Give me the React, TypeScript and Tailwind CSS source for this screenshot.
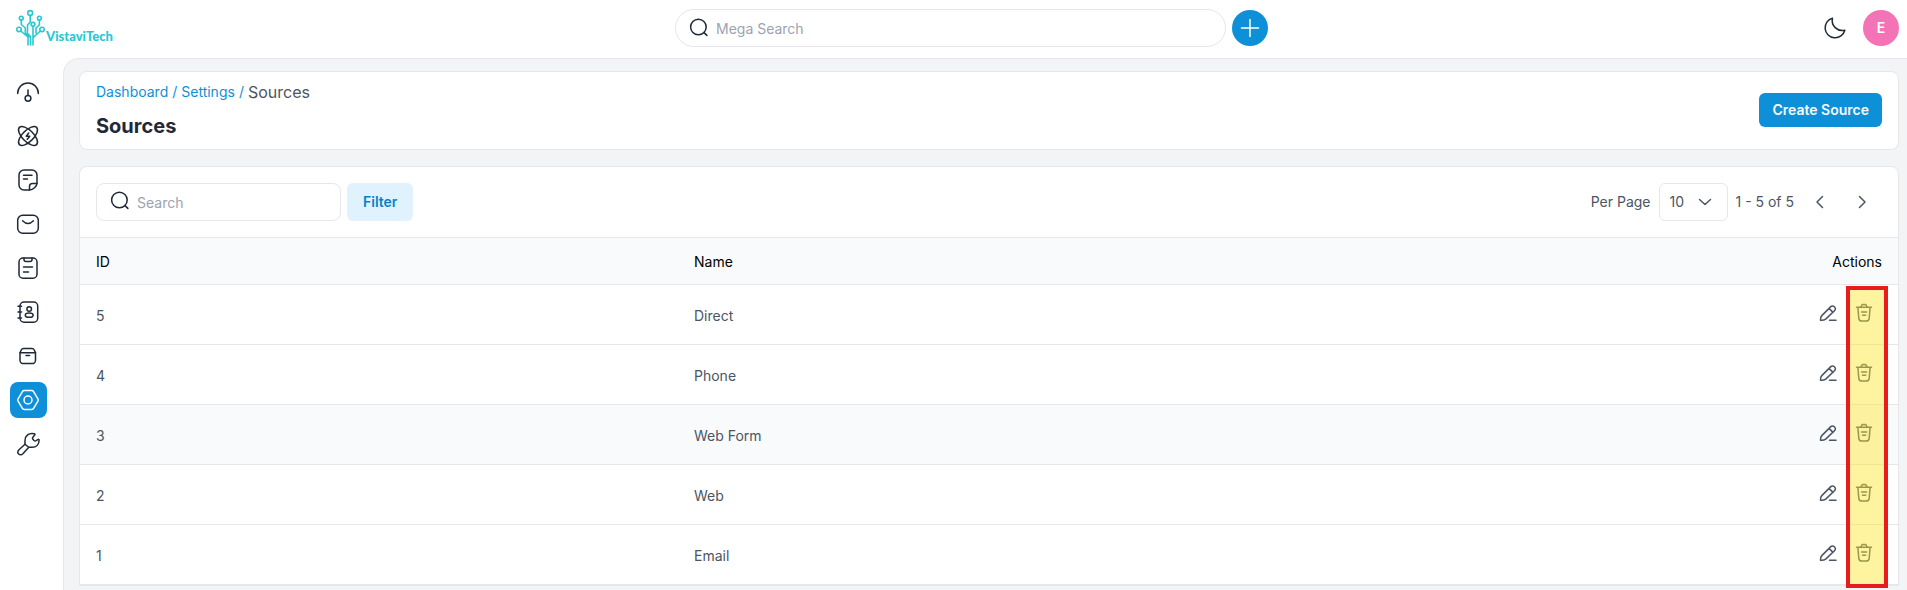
import React from "react";

type IconProps = { children: React.ReactNode; className?: string; stroke?: number };

function Icon({ children, className = "size-6", stroke = 1.5 }: IconProps) {
  return (
    <svg
      viewBox="0 0 24 24"
      className={className}
      fill="none"
      stroke="currentColor"
      strokeWidth={stroke}
      strokeLinecap="round"
      strokeLinejoin="round"
      aria-hidden="true"
    >
      {children}
    </svg>
  );
}

const SearchIcon = ({ className }: { className?: string }) => (
  <Icon className={className}>
    <circle cx="11.4" cy="11" r="7.8" />
    <path d="m17 16.6 2.9 2.8" />
  </Icon>
);

const navItems: { label: string; active?: boolean; icon: React.ReactNode }[] = [
  {
    label: "Dashboard",
    icon: (
      <>
        <path d="M1.7 13.6V13a10.3 10 0 0 1 20.6 0v.6" />
        <circle cx="12" cy="18.3" r="2.9" />
        <path d="M12 10v5.3" />
      </>
    ),
  },
  {
    label: "Leads",
    icon: (
      <>
        <path d="M20.6 20.6c2.3-2.2.2-7.6-4.6-12.5C11.2 3.3 5.6 1.2 3.4 3.4c-2.2 2.2-.1 7.7 4.6 12.5 4.8 4.7 10.4 6.9 12.6 4.7Z" />
        <path d="M16 15.9c4.800-4.800 6.800-10.300 4.600-12.500-2.200-2.200-7.700 0-12.600 4.700-4.700 4.800-6.800 10.300-4.600 12.500 2.200 2.200 7.800 0 12.600-4.700Z" />
        <path d="m12.700 9-2.400 3.300h3.400L11.300 15.300" />
      </>
    ),
  },
  {
    label: "Quotes",
    icon: (
      <>
        <path d="M13.500 22H8a5 5 0 0 1-5-5V7a5 5 0 0 1 5-5h8a5 5 0 0 1 5 5v8c0 3.500-4 7-7.500 7Z" />
        <path d="M13.500 22v-3.500a3 3 0 0 1 3-3H21M7.500 7.200h8.500M7.500 11h4" />
      </>
    ),
  },
  {
    label: "Mail",
    icon: (
      <>
        <rect x="1.7" y="3.2" width="20.6" height="18" rx="5" />
        <path d="M6.600 8.700c3.600 3.700 7.200 3.700 10.800 0" />
      </>
    ),
  },
  {
    label: "Activities",
    icon: (
      <>
        <rect x="3" y="2" width="18" height="20.2" rx="4" />
        <path d="M8 2v1.500a2 2 0 0 0 2 2h4a2 2 0 0 0 2-2V2M7.500 11h9M7.500 16h5" />
      </>
    ),
  },
  {
    label: "Contacts",
    icon: (
      <>
        <rect x="4" y="2" width="17.7" height="20.2" rx="4" />
        <path d="M2 6.200h3.500M2 12h3.500M2 18h3.500" />
        <circle cx="13.2" cy="9" r="2.3" />
        <ellipse cx="13.2" cy="15.2" rx="3.9" ry="2.1" />
      </>
    ),
  },
  {
    label: "Products",
    icon: (
      <>
        <path d="M4 8.800 5.200 6a2.600 2.600 0 0 1 2.300-1.400h8.500A2.600 2.600 0 0 1 18.300 6l1.200 2.800v7.400a3.400 3.400 0 0 1-3.400 3.400H7.400A3.400 3.400 0 0 1 4 16.200Z" />
        <path d="M4 8.800h15.500M10 11.500h3.500" />
      </>
    ),
  },
  {
    label: "Settings",
    active: true,
    icon: (
      <>
        <path d="M8.300 2.500h7.400a2.200 2.200 0 0 1 1.900 1.100l4.300 7.200a2.300 2.300 0 0 1 0 2.400l-4.300 7.200a2.200 2.200 0 0 1-1.900 1.100H8.300a2.200 2.200 0 0 1-1.900-1.100l-4.300-7.200a2.300 2.300 0 0 1 0-2.400l4.300-7.200a2.200 2.200 0 0 1 1.900-1.100Z" />
        <circle cx="12" cy="12" r="4" />
      </>
    ),
  },
  {
    label: "Configuration",
    icon: (
      <>
        <path d="M9 12.200V8.500c0-4.500 3.800-8.200 9.300-6.700.8.300.8.900.3 1.300l-1.700 2.100a1.800 1.800 0 0 0 0 2.100l1.100 1.200a1.800 1.800 0 0 0 2.200.2l1.700-1.200c.6-.4 1.200-.2 1.200.5 0 4.200-2.600 7.300-7 7.300h-3.400Z" />
        <path d="m9 12.200-6 5.600c-3 3 .9 7 3.900 4l5.700-6.300" />
      </>
    ),
  },
];

const rows = [
  { id: 5, name: "Direct" },
  { id: 4, name: "Phone" },
  { id: 3, name: "Web Form", highlighted: true },
  { id: 2, name: "Web" },
  { id: 1, name: "Email" },
];

function Logo() {
  return (
    <a href="#" className="flex w-[110px] items-center text-[#27c9d1]" aria-label="VistaviTech">
      <svg viewBox="0 0 30 38" className="h-[38px] w-[30px] shrink-0" fill="none" stroke="currentColor" strokeWidth="1.6" strokeLinecap="round" strokeLinejoin="round" aria-hidden="true">
        <circle cx="14.2" cy="4" r="2.4" />
        <circle cx="5.3" cy="9.2" r="1.9" />
        <circle cx="23.4" cy="9.2" r="1.9" />
        <circle cx="17" cy="15.3" r="1.9" />
        <circle cx="3" cy="20.4" r="2.2" />
        <circle cx="26" cy="20.4" r="2.2" />
        <path d="M14.200 6.500V13l-2.700 3v8.500M5.300 11.200v4.300l4 3.500v5M23.400 11.200v4.500L20 19v5M17 17.300V36M4.700 22l7.300 6v8M24.300 22l-6 5.500-1.300 1M9.300 24l5.200 4.500V36M11.500 24.500l3 3" />
      </svg>
      <span className="mt-4 font-[Lato,sans-serif] text-[13px] leading-4 font-black">VistaviTech</span>
    </a>
  );
}

export default function App() {
  return (
    <div className="flex min-h-screen flex-col bg-white font-[Inter,sans-serif] text-sm text-[#4b5563]">
      <header className="flex items-center justify-between py-[9px] pr-2 pl-4">
        <Logo />
        <div className="flex items-center gap-1.5">
          <div className="relative flex items-center text-[#1f2937]">
            <SearchIcon className="pointer-events-none absolute left-3 size-6" />
            <input
              type="text"
              aria-label="Mega Search"
              placeholder="Mega Search"
              className="h-[38px] w-[551px] rounded-full border border-[#e5e7eb] bg-white pr-4 pl-10 placeholder:text-[#9ca3af]"
            />
          </div>
          <button type="button" aria-label="Quick create" className="flex size-9 items-center justify-center rounded-full bg-[#0e90d9] text-white">
            <Icon>
              <path d="M3.500 12h17M12 3.500v17" />
            </Icon>
          </button>
        </div>
        <div className="flex items-center gap-2.5">
          <button type="button" aria-label="Dark mode" className="flex size-9 items-center justify-center text-[#1f2937]">
            <Icon>
              <path d="M9.500 2.200a10 10 0 1 0 12.300 12.100c-7.500 1.500-14-4.600-12.300-12.100Z" />
            </Icon>
          </button>
          <button type="button" aria-label="Account" className="size-9 rounded-full bg-[#f472b6] font-semibold text-white">
            E
          </button>
        </div>
      </header>

      <div className="flex flex-1">
        <nav className="flex w-[63px] shrink-0 flex-col gap-2 px-2.5 pt-[18px]">
          {navItems.map((item) => (
            <a
              key={item.label}
              href="#"
              aria-label={item.label}
              className={
                item.active
                  ? "flex h-9 w-[37px] items-center rounded-lg bg-[#0e90d9] pl-1.5 text-white"
                  : "flex h-9 w-[37px] items-center rounded-lg pl-1.5 text-[#1f2937]"
              }
            >
              <Icon>{item.icon}</Icon>
            </a>
          ))}
        </nav>

        <main className="mt-[2px] flex min-w-0 flex-1 flex-col gap-4 rounded-tl-2xl border-t border-l border-[#e5e7eb] bg-[#f3f4f6] pt-3 pr-2 pl-[15px]">
          <section className="flex min-h-[79px] items-center justify-between rounded-lg border border-[#e5e7eb] bg-white px-4 pt-1.5 pb-2">
            <div className="flex flex-col gap-2">
              <nav aria-label="Breadcrumb" className="flex items-center gap-1 leading-6">
                <a href="#" className="text-[#0e90d9]">Dashboard</a>
                <span className="text-[#0e90d9]">/</span>
                <a href="#" className="text-[#0e90d9]">Settings</a>
                <span className="text-[#0e90d9]">/</span>
                <span className="text-base">Sources</span>
              </nav>
              <h1 className="text-xl leading-7 font-bold text-[#1f2937]">Sources</h1>
            </div>
            <button type="button" className="h-[34px] rounded-md bg-[#0e90d9] px-[13px] font-semibold text-gray-50">
              Create Source
            </button>
          </section>

          <section className="rounded-t-lg border border-[#e5e7eb] bg-white">
            <div className="flex items-center justify-between p-4">
              <div className="flex gap-1.5">
                <div className="relative flex items-start text-[#1f2937]">
                  <SearchIcon className="pointer-events-none absolute top-1.5 left-3 size-6" />
                  <input
                    type="text"
                    aria-label="Search"
                    placeholder="Search"
                    className="h-[38px] w-[245px] rounded-lg border border-[#e5e7eb] bg-white pr-3 pl-10 placeholder:text-[#9ca3af]"
                  />
                </div>
                <button type="button" className="h-[38px] rounded-md bg-[#e0f2fe] px-4 font-semibold text-[#0284c7]">
                  Filter
                </button>
              </div>
              <div className="flex items-center gap-2 pr-0.5">
                <label htmlFor="per-page">Per Page</label>
                <div className="relative flex items-center">
                  <select id="per-page" defaultValue="10" className="h-[38px] w-[69px] appearance-none rounded-md border border-[#e5e7eb] bg-white pl-2.5">
                    <option>10</option>
                    <option>20</option>
                    <option>50</option>
                  </select>
                  <Icon className="pointer-events-none absolute right-[11px] size-6">
                    <path d="m6.500 9.500 5.500 5 5.500-5" />
                  </Icon>
                </div>
                <span>1 - 5 of 5</span>
                <div className="flex gap-1.5">
                  <button type="button" aria-label="Previous page" className="flex size-9 items-center justify-center">
                    <Icon>
                      <path d="m14.500 6.500-5.500 5.500 5.500 5.500" />
                    </Icon>
                  </button>
                  <button type="button" aria-label="Next page" className="flex size-9 items-center justify-center">
                    <Icon>
                      <path d="m9.500 6.500 5.500 5.500-5.500 5.500" />
                    </Icon>
                  </button>
                </div>
              </div>
            </div>

            <div className="relative">
              <table className="w-full table-fixed border-separate border-spacing-0">
                <thead>
                  <tr className="h-12 bg-[#f9fafb] text-left text-black">
                    <th className="border-y border-[#e5e7eb] pt-0.5 pr-2 pl-4 font-normal">ID</th>
                    <th className="border-y border-[#e5e7eb] px-2 pt-0.5 font-normal">Name</th>
                    <th className="border-y border-[#e5e7eb] pt-0.5 pr-4 pl-2 text-right font-normal">Actions</th>
                  </tr>
                </thead>
                <tbody>
                  {rows.map((row) => (
                    <tr key={row.id} className={row.highlighted ? "h-[60px] bg-[#f9fafb]" : "h-[60px]"}>
                      <td className="border-b border-[#e5e7eb] pt-0.5 pr-2 pl-4">{row.id}</td>
                      <td className="border-b border-[#e5e7eb] px-2 pt-0.5">{row.name}</td>
                      <td className="border-b border-[#e5e7eb] pr-4 pl-2">
                        <div className="flex justify-end pb-1">
                          <button type="button" aria-label={`Edit ${row.name}`} className="flex size-9 items-center justify-center">
                            <Icon>
                              <path d="M4.500 19.200c-.2-1.700.1-3.400 1.300-4.600l9-9a2.300 2.300 0 0 1 3.300 0l.6.600a2.300 2.300 0 0 1 0 3.300l-9 8.600c-1.400 1-3.400 1.300-5.200 1.100ZM13 7.400l4 4M13.500 19.300H20" />
                            </Icon>
                          </button>
                          <button type="button" aria-label={`Delete ${row.name}`} className="flex size-9 items-center justify-center">
                            <Icon>
                              <path d="M4.500 6.200h15M8.900 6l.8-1.700a1.400 1.400 0 0 1 1.200-.7h2.200a1.400 1.400 0 0 1 1.200.7l.8 1.700M5.900 6.400l.9 11a3 3 0 0 0 3 2.700h4.400a3 3 0 0 0 3-2.700l.9-11M9.500 11h5.200M10.500 14.300h3.200" />
                            </Icon>
                          </button>
                        </div>
                      </td>
                    </tr>
                  ))}
                </tbody>
              </table>
              <div className="pointer-events-none absolute top-[49px] right-2.5 -bottom-[3px] w-[42px] border-4 border-[#e81c1c] bg-[rgba(253,230,44,0.45)]" />
            </div>
          </section>
        </main>
      </div>
    </div>
  );
}
